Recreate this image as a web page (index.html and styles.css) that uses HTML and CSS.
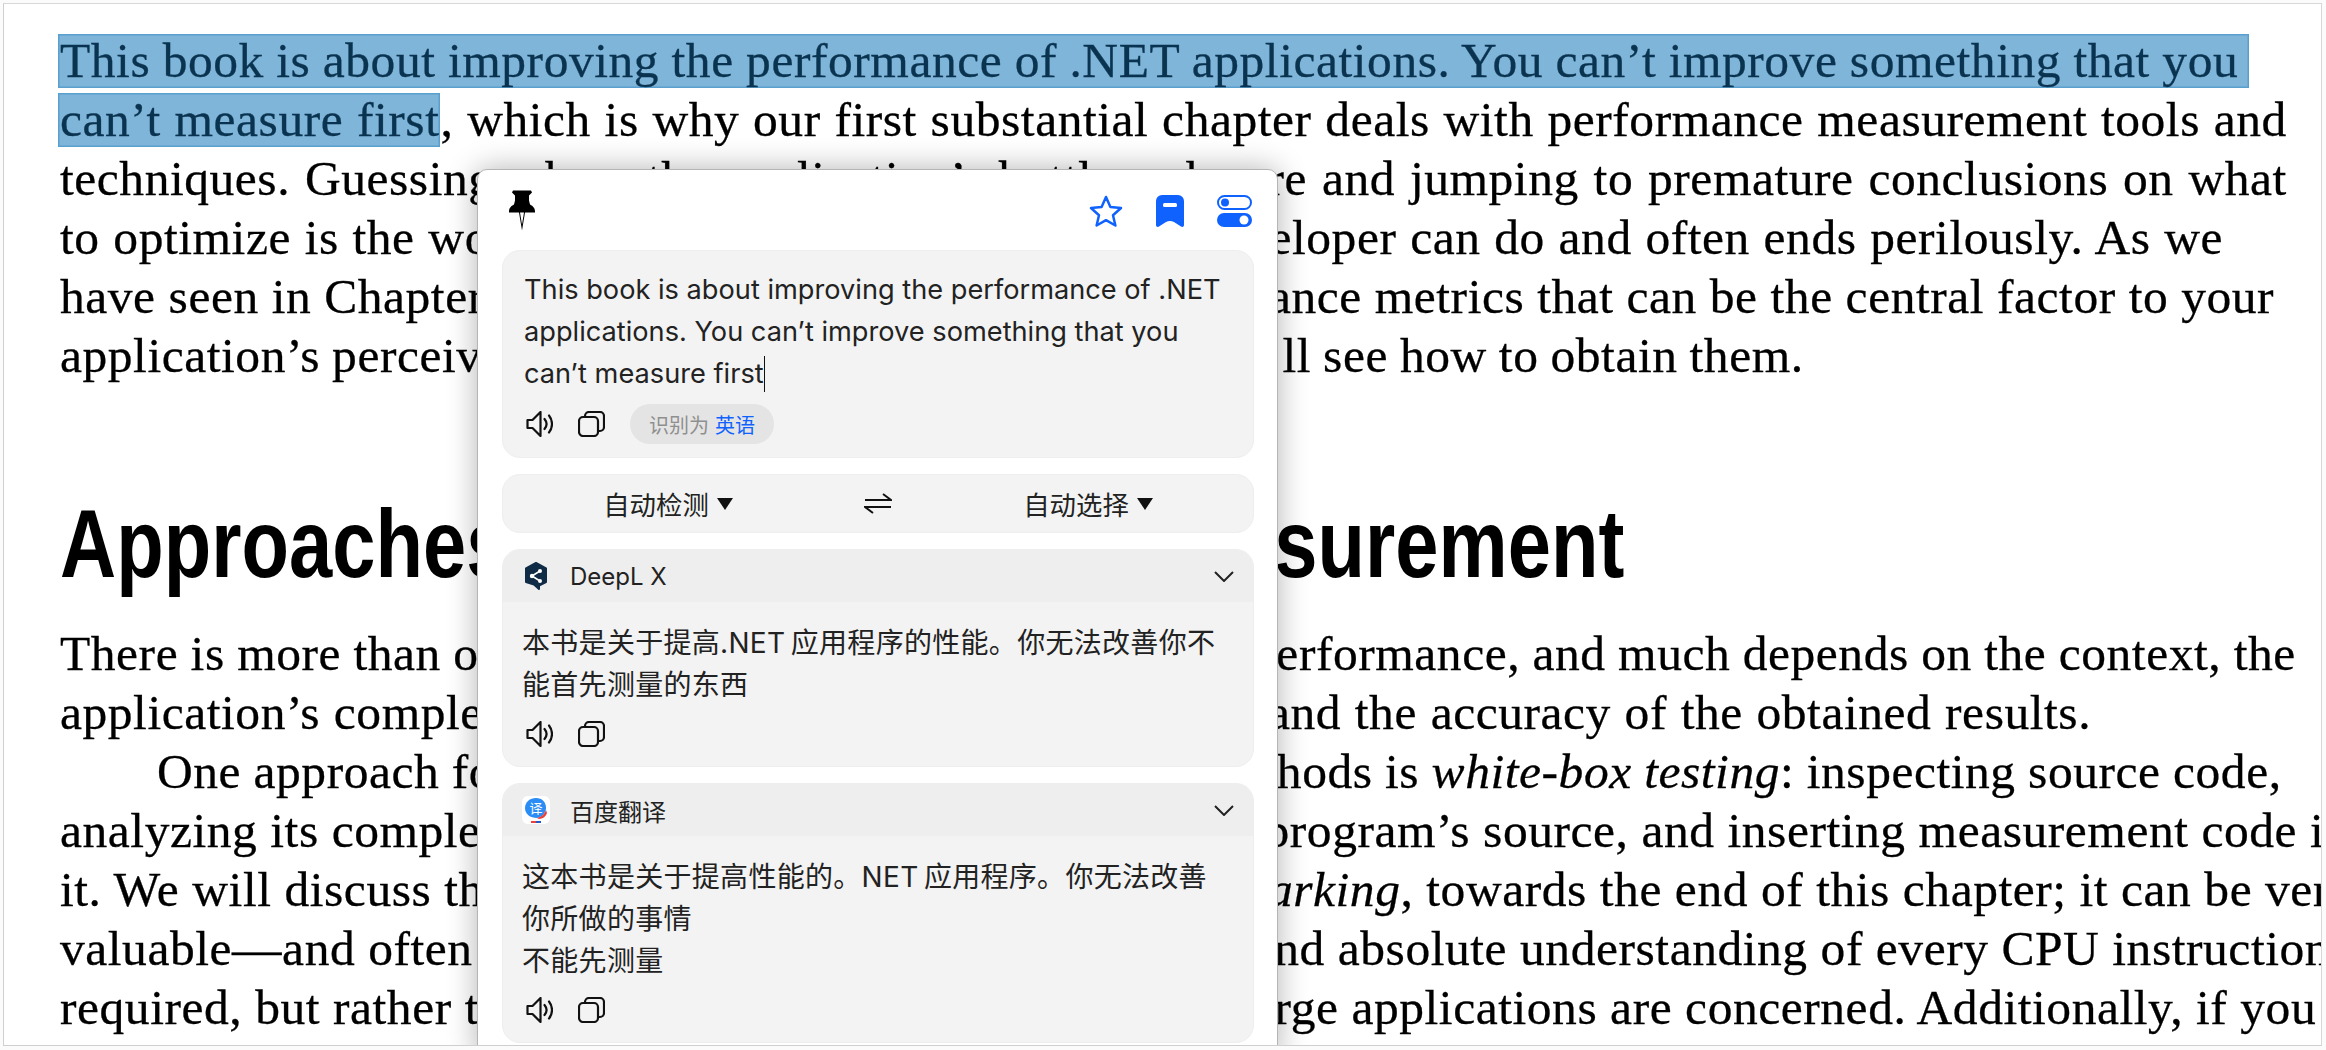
FILE: index.html
```html
<!DOCTYPE html>
<html lang="en">
<head>
<meta charset="utf-8">
<title>Book translation</title>
<link rel="stylesheet" href="styles.css">
</head>
<body>
<main class="page">
  <article class="book">
    <div class="para">
      <div class="line ws-tight"><span class="sel sel-wide">This book is about improving the performance of .NET applications. You can’t improve something that you</span></div>
      <div class="line ws-loose"><span class="sel">can’t measure first</span>, which is why our first substantial chapter deals with performance measurement tools and</div>
      <div class="line ws-wide">techniques. Guessing where the application’s bottlenecks are and jumping to premature conclusions on what</div>
      <div class="line ws-loose">to optimize is the worst thing a performance-conscious developer can do and often ends perilously. As we</div>
      <div class="line">have seen in Chapter 1, there are several important performance metrics that can be the central factor to your</div>
      <div class="line ws-tighter">application’s perceived performance, and in this chapter we’ll see how to obtain them.</div>
    </div>
    <h2 class="heading">Approaches to Performance Measurement</h2>
    <div class="para">
      <div class="line ws-tight">There is more than one approach to measuring application performance, and much depends on the context, the</div>
      <div class="line ws-loose">application’s complexity, the type of information required, and the accuracy of the obtained results.</div>
      <div class="line indent ws-tight">One approach for testing small programs or library methods is <em>white-box testing</em>: inspecting source code,</div>
      <div class="line">analyzing its complexity on the whiteboard, modifying the program’s source, and inserting measurement code in</div>
      <div class="line">it. We will discuss this approach, often called <em>microbenchmarking</em>, towards the end of this chapter; it can be very</div>
      <div class="line">valuable—and often indispensable—where precise results and absolute understanding of every CPU instruction is</div>
      <div class="line">required, but rather time-consuming and inflexible where large applications are concerned. Additionally, if you</div>
    </div>
  </article>

  <aside class="popup">
    <header class="topbar">
      <svg class="pin" viewBox="0 0 26 40"><path d="M4 0h18l1 2-3 3v5l1 4c2 1 5 3 5 7v1H16l-3 18-3-18H0v-1c0-4 3-6 5-7l1-4V5L3 2z"/><path d="M11 22h4l-2 12z" fill="#fff"/></svg>
      <div class="actions">
        <svg class="star" viewBox="0 0 34 32"><path d="M17 2l4.400 10 10.600 1-8 7.200 2.400 10.300L17 25.200 7.600 30.500 10 20.200l-8-7.200 10.600-1z"/></svg>
        <svg class="mark" viewBox="0 0 28 32"><path d="M6 0h16a6 6 0 0 1 6 6v24c0 2-2 2.500-3 1.500L18 27c-2.500-1.500-5.500-1.500-8 0l-7 4.500c-1 1-3 .5-3-1.500V6a6 6 0 0 1 6-6z"/><rect x="7" y="8" width="14" height="4" rx="1.500" fill="#fff"/></svg>
        <svg class="toggles" viewBox="0 0 35 32"><rect x="1" y="1" width="33" height="13" rx="6.500" fill="#fff" stroke="#0f62fe" stroke-width="2"/><circle cx="8" cy="7.500" r="4"/><rect x="0" y="18" width="35" height="14" rx="7"/><circle cx="27" cy="25" r="4.500" fill="#fff"/></svg>
      </div>
    </header>

    <section class="box source">
      <p class="text source-text">This book is about improving the performance of .NET applications. You can’t improve something that you can’t measure first<span class="caret"></span></p>
      <div class="tools">
        <svg class="speak" viewBox="0 0 27 26"><path d="M1.500 9v8h5l8 8V1l-8 8z"/><path d="M18.500 8c2.500 3 2.500 7 0 10M23 4.500c4 5 4 12 0 17"/></svg>
        <svg class="copy" viewBox="0 0 27 26"><rect x="1" y="6" width="19" height="19" rx="4"/><path d="M7 6V5a4 4 0 0 1 4-4h11a4 4 0 0 1 4 4v11a4 4 0 0 1-4 4h-2"/></svg>
        <span class="pill">识别为<b class="pill-lang">英语</b></span>
      </div>
    </section>

    <section class="box selector">
      <div class="lang"><span>自动检测</span><i class="tri"></i></div>
      <svg class="swap" viewBox="0 0 28 21"><path d="M1 7h26L19 1M27 14H1l8 6"/></svg>
      <div class="lang"><span>自动选择</span><i class="tri"></i></div>
    </section>

    <section class="box card">
      <header class="card-head">
        <svg class="logo deepl" viewBox="0 0 24 28"><path d="M12 1l10 5.500V20l-7 3.500V27l-5-4.500L2 20V6.500z" fill="#0f2b46" stroke="#0f2b46" stroke-width="2" stroke-linejoin="round"/><path d="M8 14l8-5M8 14l8 5" stroke="#fff" stroke-width="1.500"/><circle cx="8" cy="14" r="2.200" fill="#fff"/><circle cx="16" cy="9" r="2" fill="#fff"/><circle cx="16" cy="19" r="2" fill="#fff"/></svg>
        <span class="name">DeepL X</span>
        <svg class="chev" viewBox="0 0 20 11"><path d="M1 1l9 9 9-9"/></svg>
      </header>
      <div class="card-body">
        <p class="text">本书是关于提高.NET&#8201;应用程序的性能。你无法改善你不能首先测量的东西</p>
        <div class="tools">
          <svg class="speak" viewBox="0 0 27 26"><path d="M1.500 9v8h5l8 8V1l-8 8z"/><path d="M18.500 8c2.500 3 2.500 7 0 10M23 4.500c4 5 4 12 0 17"/></svg>
          <svg class="copy" viewBox="0 0 27 26"><rect x="1" y="6" width="19" height="19" rx="4"/><path d="M7 6V5a4 4 0 0 1 4-4h11a4 4 0 0 1 4 4v11a4 4 0 0 1-4 4h-2"/></svg>
        </div>
      </div>
    </section>

    <section class="box card">
      <header class="card-head">
        <svg class="logo baidu" viewBox="0 0 28 28"><rect width="28" height="28" rx="6" fill="#fff"/><path d="M14 2c6 0 10 4 10 10 0 5-4 9-9 10-7 0-12-4-12-10C3 6 8 2 14 2z" fill="#2b8cf5"/><path d="M15 22c4-1 7-3 9-8l1 3c-1 3-4 6-8 6z" fill="#e8413c"/><rect x="9" y="25" width="5" height="2" fill="#e8413c"/><rect x="14" y="25" width="5" height="2" fill="#2456c8"/><text x="14" y="17" class="baidu-glyph">译</text></svg>
        <span class="name">百度翻译</span>
        <svg class="chev" viewBox="0 0 20 11"><path d="M1 1l9 9 9-9"/></svg>
      </header>
      <div class="card-body">
        <p class="text">这本书是关于提高性能的。NET&#8201;应用程序。你无法改善<br>你所做的事情<br>不能先测量</p>
        <div class="tools">
          <svg class="speak" viewBox="0 0 27 26"><path d="M1.500 9v8h5l8 8V1l-8 8z"/><path d="M18.500 8c2.500 3 2.500 7 0 10M23 4.500c4 5 4 12 0 17"/></svg>
          <svg class="copy" viewBox="0 0 27 26"><rect x="1" y="6" width="19" height="19" rx="4"/><path d="M7 6V5a4 4 0 0 1 4-4h11a4 4 0 0 1 4 4v11a4 4 0 0 1-4 4h-2"/></svg>
        </div>
      </div>
    </section>
  </aside>
</main>
</body>
</html>
```

FILE: styles.css
```css
* { box-sizing: border-box; }
html, body { margin: 0; height: 100%; background: #fbfbfb; overflow: hidden; }
.page {
  position: relative;
  width: 2319px;
  height: 1043px;
  margin: 3px 0 0 3px;
  background: #fff;
  border-left: 1px solid #cfcfcf;
  border-right: 1px solid #d8d8d8;
  border-top: 1px solid #d8d8d8;
  border-bottom: 1px solid #cfcfcf;
  overflow: hidden;
}
.book {
  padding: 27px 0 0 56px;
  font-family: "Liberation Serif", serif;
  font-size: 49.500px;
  letter-spacing: .55px;
  line-height: 59px;
  color: #000;
  -webkit-text-stroke: .3px currentColor;
}
.line { white-space: nowrap; height: 59px; }
.ws-tighter { word-spacing: -.9px; }
.ws-tight { word-spacing: -.5px; }
.ws-loose { word-spacing: .8px; }
.ws-wide { word-spacing: 1.900px; }
.indent { padding-left: 97px; }
.sel {
  display: inline-block;
  height: 54px;
  line-height: 54px;
  margin-left: -2px;
  padding: 0 1px 0 2px;
  background: #7fb5d8;
  color: #0a3350;
  box-shadow: inset 0 0 0 1.500px #5aa0cf;
}
.sel-wide { padding-right: 11px; }
.heading {
  margin: 105px 0 26px;
  font-family: "Liberation Sans", sans-serif;
  font-size: 96px;
  line-height: 108px;
  font-weight: 700;
  letter-spacing: 0;
  white-space: nowrap;
  transform: scaleX(.81);
  transform-origin: left center;
  -webkit-text-stroke: 0;
}
.popup {
  position: absolute;
  left: 473px;
  top: 165px;
  width: 801px;
  height: 890px;
  padding: 20px 24px 0;
  background: #fff;
  border: 1px solid #b5b5b5;
  border-radius: 10px 10px 0 0;
  box-shadow: 0 0 30px rgba(0,0,0,.3);
  font-family: Inter, "Noto Sans CJK SC", sans-serif;
  color: #222;
  display: flex;
  flex-direction: column;
}
.topbar { display: flex; justify-content: space-between; align-items: flex-start; height: 60px; padding: 0 1px 0 7px; }
.pin { width: 26px; height: 41px; fill: #000; display: block; }
.actions { display: flex; gap: 33px; padding-top: 5px; }
.star { width: 34px; height: 32px; fill: none; stroke: #0f62fe; stroke-width: 2.500; stroke-linejoin: round; }
.mark { width: 28px; height: 32px; fill: #0f62fe; }
.toggles { width: 35px; height: 32px; fill: #0f62fe; }
.box { width: 752px; background: #f3f3f3; border: 1px solid #eee; border-radius: 18px; }
.source { height: 208px; padding: 18px 21px 0; }
.text { margin: 0; font-size: 28px; letter-spacing: .3px; line-height: 42px; color: #222; }
.source-text { font-size: 27.200px; letter-spacing: 0; }
.caret { display: inline-block; width: 1.500px; height: 36px; background: #111; vertical-align: -9px; }
.tools { display: flex; align-items: center; gap: 25px; }
.source .tools { margin-top: 9px; height: 40px; padding-left: 2px; }
.speak { width: 27px; height: 26px; fill: none; stroke: #111; stroke-width: 2.200; stroke-linejoin: round; stroke-linecap: round; }
.copy { width: 27px; height: 26px; fill: none; stroke: #111; stroke-width: 2.200; }
.pill {
  display: inline-flex; align-items: center; gap: 6px;
  height: 40px; padding: 0 19px;
  border-radius: 20px; background: #e4e4e4;
  font-size: 20px; color: #8f8f8f;
}
.pill-lang { font-weight: 400; color: #0f62fe; }
.selector {
  height: 59px; margin-top: 16px;
  display: grid; grid-template-columns: 1fr 28px 1fr; column-gap: 31px; align-items: center;
}
.lang { display: flex; align-items: center; justify-content: center; gap: 8px; font-size: 26.400px; color: #222; }
.tri { width: 0; height: 0; border-left: 8px solid transparent; border-right: 8px solid transparent; border-top: 12px solid #111; }
.swap { width: 28px; height: 21px; fill: none; stroke: #111; stroke-width: 2; }
.card { margin-top: 16px; overflow: hidden; }
.card-head { height: 52px; background: #eee; display: flex; align-items: center; padding: 0 19px 0 21px; }
.logo { width: 24px; height: 28px; flex: none; }
.logo.baidu { width: 28px; margin-left: -2px; margin-right: -2px; }
.baidu-glyph { font-family: "Noto Sans CJK SC", sans-serif; font-size: 13px; fill: #fff; text-anchor: middle; }
.name { margin-left: 22px; font-size: 24px; color: #222; flex: 1; }
.chev { width: 20px; height: 11px; fill: none; stroke: #222; stroke-width: 2; }
.card-body { padding: 20px 19px 19px; }
.card-body .tools { margin-top: 15px; padding-left: 4px; }
```
